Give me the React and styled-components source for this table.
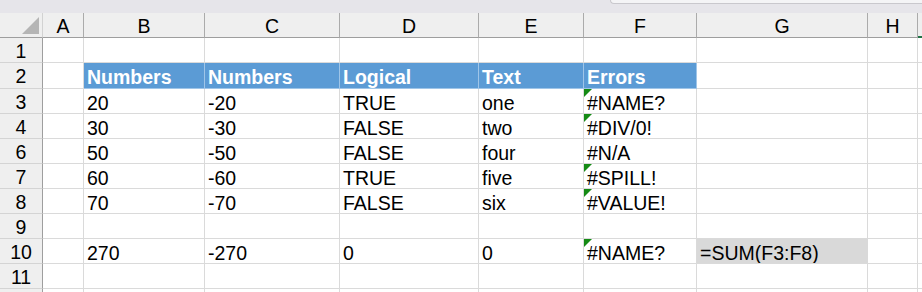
import React from "react";
import styled, { createGlobalStyle, css } from "styled-components";

const Global = createGlobalStyle`
  html, body { margin: 0; padding: 0; overflow: hidden; background: #ffffff; }
  body { font-family: "Liberation Sans", Arial, sans-serif; }
`;

const Page = styled.div`
  width: 922px;
  height: 292px;
  overflow: hidden;
  background: #ffffff;
`;

const TopStrip = styled.div`
  height: 13px;
  background: #e6e5ea;
  display: flex;
  align-items: flex-start;
`;

const FormulaEdge = styled.div`
  margin-left: auto;
  width: 311px;
  height: 3px;
  background: #f4f4f6;
  border: 1px solid #c9c8cd;
  border-top: none;
  border-right: none;
  border-bottom-left-radius: 5px;
`;

const Sheet = styled.div`
  display: grid;
  grid-template-columns: 43px 41px 121px 135px 139px 105px 113px 171px 50px 1fr;
  grid-template-rows: 25px 25px 26px repeat(10, 25px);
  font-family: "Liberation Sans", Arial, sans-serif;
  font-size: 19.5px;
  color: #000;
`;

const Corner = styled.div`
  box-sizing: border-box;
  background: #efefef;
  border-right: 1px solid #d2d2d2;
  border-bottom: 1px solid #9e9e9e;
  display: flex;
  align-items: flex-end;
  justify-content: flex-end;
  padding: 0 3px 3px 0;
`;

const ColHead = styled.div`
  box-sizing: border-box;
  background: #efefef;
  border-right: 1px solid #ababab;
  border-bottom: ${(p) => (p.$active ? "2px solid #217346" : "1px solid #9e9e9e")};
  text-align: center;
  line-height: 22px;
  padding-top: 2px;
  white-space: nowrap;
  overflow: hidden;
`;

const RowHead = styled.div`
  box-sizing: border-box;
  background: #efefef;
  border-right: 1px solid #9e9e9e;
  border-bottom: 1px solid #d4d4d4;
  text-align: center;
  line-height: 22px;
  padding-top: 2px;
`;

const Cell = styled.div`
  position: relative;
  box-sizing: border-box;
  border-right: 1px solid #dadada;
  border-bottom: 1px solid #dadada;
  padding: 3px 3px 0;
  line-height: 22px;
  white-space: nowrap;
  overflow: hidden;
  background: #ffffff;
  ${(p) =>
    p.$fill === "blue" &&
    css`
      background: #5b9bd5;
      color: #ffffff;
      font-weight: bold;
      border-right-color: #9fc5e8;
      border-bottom-color: #9fc5e8;
    `}
  ${(p) =>
    p.$fill === "gray" &&
    css`
      background: #d9d9d9;
      border-right-color: #d9d9d9;
    `}
`;

const ErrorMark = styled.span`
  position: absolute;
  top: 0;
  left: 0;
  width: 0;
  height: 0;
  border-top: 8px solid #158a15;
  border-right: 8px solid transparent;
`;

const COLS = ["A", "B", "C", "D", "E", "F", "G", "H", ""];

const ROWS = [
  { n: 1, cells: {} },
  { n: 2, head: true, cells: { B: "Numbers", C: "Numbers", D: "Logical", E: "Text", F: "Errors" } },
  { n: 3, err: true, cells: { B: "20", C: "-20", D: "TRUE", E: "one", F: "#NAME?" } },
  { n: 4, err: true, cells: { B: "30", C: "-30", D: "FALSE", E: "two", F: "#DIV/0!" } },
  { n: 6, err: false, cells: { B: "50", C: "-50", D: "FALSE", E: "four", F: "#N/A" } },
  { n: 7, err: true, cells: { B: "60", C: "-60", D: "TRUE", E: "five", F: "#SPILL!" } },
  { n: 8, err: true, cells: { B: "70", C: "-70", D: "FALSE", E: "six", F: "#VALUE!" } },
  { n: 9, cells: {} },
  { n: 10, err: true, formula: true, cells: { B: "270", C: "-270", D: "0", E: "0", F: "#NAME?", G: "=SUM(F3:F8)" } },
  { n: 11, cells: {} },
  { n: 12, hideLabel: true, cells: {} },
];

const HEAD_COLS = ["B", "C", "D", "E", "F"];

function CornerMark() {
  return (
    <svg width="17" height="17" viewBox="0 0 17 17">
      <polygon points="17,0 17,17 0,17" fill="#b5b5b5" />
    </svg>
  );
}

export default function App() {
  return (
    <Page>
      <Global />
      <TopStrip>
        <FormulaEdge />
      </TopStrip>
      <Sheet>
        <Corner>
          <CornerMark />
        </Corner>
        {COLS.map((c, i) => (
          <ColHead key={i} $active={c === ""}>
            {c}
          </ColHead>
        ))}
        {ROWS.map((r) => (
          <React.Fragment key={r.n}>
            <RowHead>{r.hideLabel ? null : r.n}</RowHead>
            {COLS.map((c, i) => {
              const text = c ? r.cells[c] : undefined;
              let fill;
              if (r.head && HEAD_COLS.includes(c)) fill = "blue";
              if (r.formula && c === "G") fill = "gray";
              return (
                <Cell key={i} $fill={fill}>
                  {c === "F" && r.err && <ErrorMark />}
                  {text}
                </Cell>
              );
            })}
          </React.Fragment>
        ))}
      </Sheet>
    </Page>
  );
}
